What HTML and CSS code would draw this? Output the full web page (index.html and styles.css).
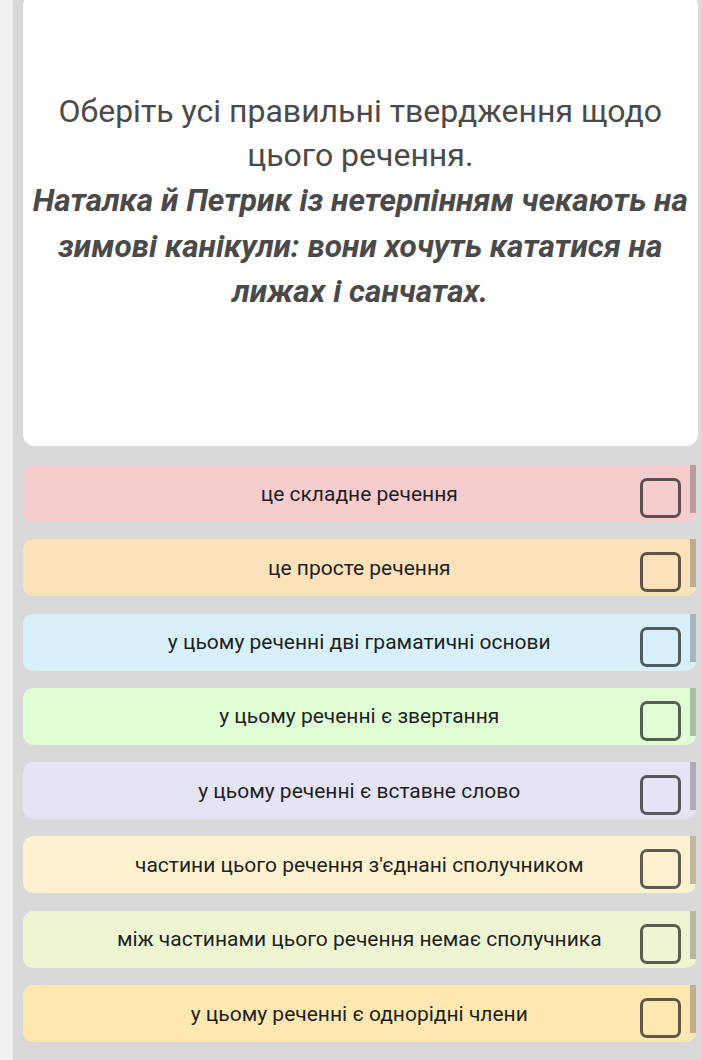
FILE: index.html
```html
<!DOCTYPE html>
<html lang="uk">
<head>
  <meta charset="UTF-8" />
  <meta name="viewport" content="width=device-width, initial-scale=1.0"/>
  <title>Тест</title>
  <link rel="stylesheet" href="styles.css">
</head>
<body>
  <div class="quiz">
    <div class="question">
      <p>Оберіть усі правильні твердження щодо цього речення.<br>
        <b><i>Наталка й Петрик із нетерпінням чекають на зимові канікули: вони хочуть кататися на лижах і санчатах.</i></b></p>
    </div>

    <div class="options">
      <div class="option pink"><span class="label">це складне речення</span><span class="box"></span></div>
      <div class="option orange"><span class="label">це просте речення</span><span class="box"></span></div>
      <div class="option blue"><span class="label">у цьому реченні дві граматичні основи</span><span class="box"></span></div>
      <div class="option green"><span class="label">у цьому реченні є звертання</span><span class="box"></span></div>
      <div class="option lilac"><span class="label">у цьому реченні є вставне слово</span><span class="box"></span></div>
      <div class="option cream"><span class="label">частини цього речення з'єднані сполучником</span><span class="box"></span></div>
      <div class="option lime"><span class="label">між частинами цього речення немає сполучника</span><span class="box"></span></div>
      <div class="option yellow"><span class="label">у цьому реченні є однорідні члени</span><span class="box"></span></div>
    </div>
  </div>
</body>
</html>
```

FILE: styles.css
```css
body {
  margin: 0;
  background: #f1f1f1;
  font-family: Roboto, 'Noto Sans', sans-serif;
  overflow: hidden;
}

.quiz {
  margin-left: 13px;
  height: 1100px;
  background: #d9d9d9;
  padding: 0 4px 0 9.5px;
}

.question {
  margin-top: -6px;
  height: 452px;
  box-sizing: border-box;
  padding: 94.6px 4px 0;
  background: #fff;
  border-radius: 12px;
  text-align: center;
  color: #4a4a4a;
}

.question p {
  margin: 0;
  font-size: 32px;
  line-height: 44.7px;
}

.question b {
  font-weight: 700;
  font-size: 31.6px;
}

.options {
  display: flex;
  flex-direction: column;
  gap: 17.3px;
  padding-top: 19px;
  margin-right: 2px;
}

.option {
  position: relative;
  display: grid;
  grid-template-columns: 56px 1fr 56px;
  height: 57px;
  border-radius: 10px 0 10px 10px;
  font-size: 21px;
  color: #1f1f1f;
}

.option::after {
  content: "";
  position: absolute;
  top: 0;
  right: 0;
  bottom: 9px;
  width: 6px;
  background: rgba(0, 0, 0, 0.24);
}

.label {
  grid-column: 2;
  align-self: center;
  text-align: center;
  white-space: nowrap;
}

.box {
  grid-column: 3;
  align-self: end;
  width: 41px;
  height: 40px;
  box-sizing: border-box;
  margin-bottom: 4px;
  border: 3px solid rgba(0, 0, 0, 0.62);
  border-radius: 7px;
}

.pink { background: #f6cdcf; }
.orange { background: #fbe2bb; }
.blue { background: #d8f0f9; }
.green { background: #e0fdd5; }
.lilac { background: #e4e4f4; }
.cream { background: #fdf1cf; }
.lime { background: #eef5d2; }
.yellow { background: #fde8b2; }
```
